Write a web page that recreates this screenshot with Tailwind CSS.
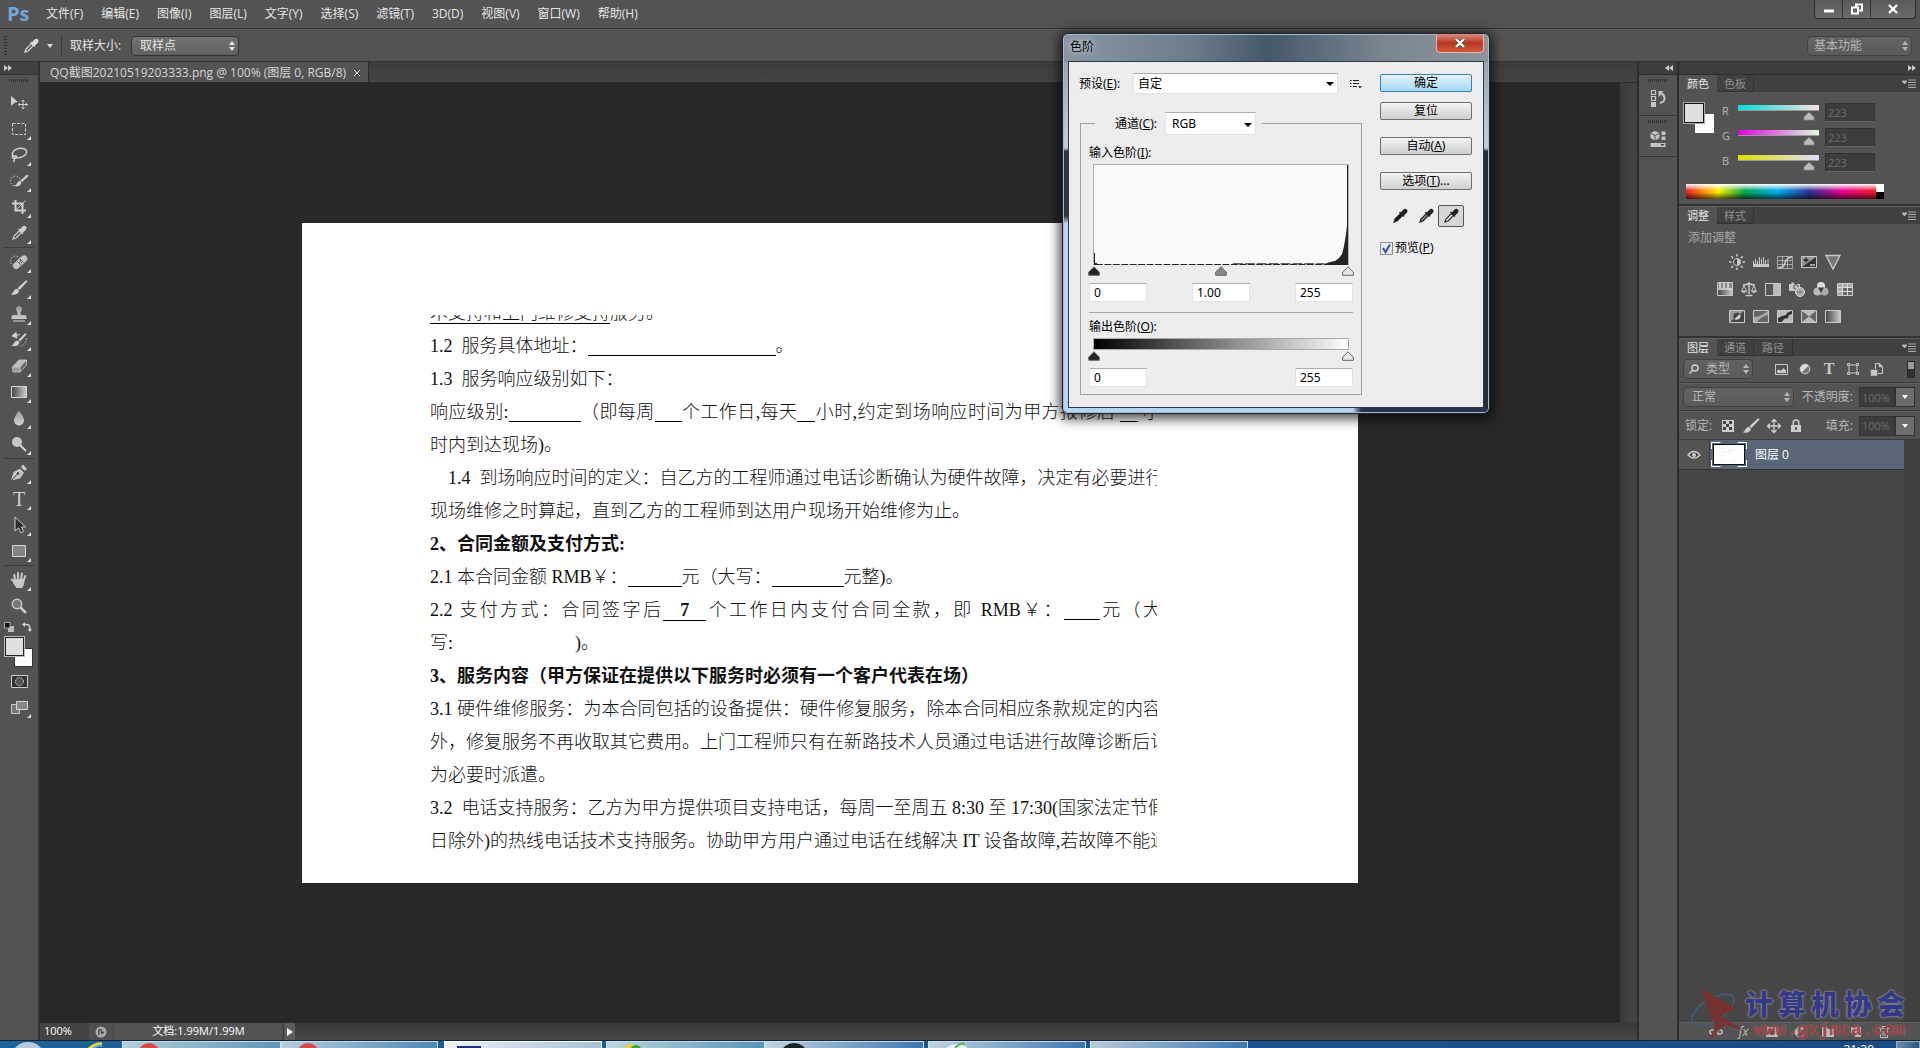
<!DOCTYPE html>
<html lang="zh-CN">
<head>
    <meta charset="UTF-8">
    <meta name="viewport" content="width=device-width, initial-scale=1.0">
    <title>QQ截图20210519203333.png @ 100%</title>
    <script src="https://cdn.jsdelivr.net/npm/@tailwindcss/browser@4"></script>
</head>
<body class="relative flex h-screen flex-col overflow-hidden bg-[#535353] font-['Open_Sans','Noto_Sans_CJK_SC',sans-serif] text-xs text-[#e6e6e6]">

    <!-- Shared icons -->
    <svg class="absolute h-0 w-0" aria-hidden="true">
        <symbol id="dropper" viewBox="0 0 16 16">
            <path d="M2 14l1-3 5.500-5.500 2 2L5 13z" fill="none" stroke="currentColor" stroke-width="1.200"/>
            <path d="M7.500 4l4.500 4.500M9 5.500l3-3.500q1.500-1 2.300 0t0 2.300L11 7.500z" fill="currentColor" stroke="currentColor" stroke-width="1.500"/>
        </symbol>
        <symbol id="brush" viewBox="0 0 18 16">
            <path d="M17 .5q.8.6 0 1.500L9.500 10l-2-1.800L15.500.7q1-.6 1.500-.2zM7 8.800l2 1.900q-.5 3-4 3.800-2 .5-4.500-.3 2.300-.6 2.800-2.400Q4 9.200 7 8.800z" fill="currentColor"/>
        </symbol>
        <symbol id="updown" viewBox="0 0 8 10">
            <path d="M4 0l3 4H1zM4 10l3-4H1z" fill="currentColor"/>
        </symbol>
        <symbol id="menu" viewBox="0 0 14 9">
            <path d="M0 2h5L2.500 5zM6 1h8M6 3.500h8M6 6h8M6 8.500h8" fill="currentColor" stroke="currentColor" stroke-width=".9"/>
        </symbol>
        <symbol id="thumb" viewBox="0 0 12 10">
            <path d="M6 .8L11.300 6v3.300H.7V6z" fill="currentColor" stroke="#666"/>
        </symbol>
        <symbol id="corner" viewBox="0 0 4 4"><path d="M4 0v4H0z" fill="#ddd"/></symbol>
        <linearGradient id="gray"><stop stop-color="#444"/><stop offset="1" stop-color="#ccc"/></linearGradient>
        <linearGradient id="light" x2="0" y2="1"><stop stop-color="#9a9a9a"/><stop offset="1" stop-color="#d6d6d6"/></linearGradient>
    </svg>

    <!-- Menu bar -->
    <header class="flex h-[29px] shrink-0 items-start justify-between border-b border-[#323232] pl-[7px] pr-1">
        <div class="flex h-7 items-center">
            <span class="w-[39px] text-xl font-bold text-[#76a5d5]">Ps</span>
            <nav class="flex gap-[18px] whitespace-nowrap">
                <a href="#">文件(F)</a>
                <a href="#">编辑(E)</a>
                <a href="#">图像(I)</a>
                <a href="#">图层(L)</a>
                <a href="#">文字(Y)</a>
                <a href="#">选择(S)</a>
                <a href="#">滤镜(T)</a>
                <a href="#">3D(D)</a>
                <a href="#">视图(V)</a>
                <a href="#">窗口(W)</a>
                <a href="#">帮助(H)</a>
            </nav>
        </div>
        <div class="flex h-[19px] rounded-b border border-t-0 border-[#2e2e2e] bg-linear-to-b from-[#5a5a5a] to-[#6a6a6a] text-white">
            <button aria-label="最小化" class="flex w-7 items-center justify-center border-r border-[#333]"><svg class="h-3 w-3" viewBox="0 0 12 12"><path d="M1 6.500h10v3H1z" fill="currentColor"/></svg></button>
            <button aria-label="还原" class="flex w-7 items-center justify-center border-r border-[#333]"><svg class="h-3 w-3" viewBox="0 0 12 12" fill="none" stroke="currentColor" stroke-width="2"><path d="M1 4.500h6v6H1zM5 4V1.500h6v6H8"/></svg></button>
            <button aria-label="关闭" class="flex w-11 items-center justify-center"><svg class="h-3 w-3" viewBox="0 0 12 12" stroke="currentColor" stroke-width="2.400"><path d="M2 2l8 8M10 2l-8 8"/></svg></button>
        </div>
    </header>

    <!-- Options bar -->
    <div class="flex h-[33px] shrink-0 items-center justify-between border-b border-t border-b-[#323232] border-t-[#5e5e5e] pl-1 pr-2">
        <div class="flex items-center">
            <div class="h-5 w-[3px] bg-[repeating-linear-gradient(#2f2f2f_0_1px,transparent_1px_3px)]"></div>
            <svg class="ml-4 h-4 w-4 text-[#ddd]"><use href="#dropper"/></svg>
            <svg class="ml-2 h-1 w-1.5" viewBox="0 0 6 4"><path d="M0 0h6L3 4z" fill="#ddd"/></svg>
            <div class="ml-2 h-[22px] border-l border-[#3a3a3a]"></div>
            <label for="sample" class="ml-2 w-[61px] whitespace-nowrap">取样大小:</label>
            <div class="relative">
                <select id="sample" class="h-5 w-[108px] appearance-none rounded-sm border border-[#333] bg-linear-to-b from-[#737373] to-[#606060] pl-2 text-xs"><option>取样点</option></select>
                <svg class="pointer-events-none absolute right-[3px] top-[5px] h-2.5 w-2"><use href="#updown"/></svg>
            </div>
        </div>
        <div class="relative text-[#b4b4b4]">
            <select aria-label="工作区" class="h-5 w-[105px] appearance-none rounded-sm border border-[#414141] bg-linear-to-b from-[#646464] to-[#5a5a5a] pl-1.5 text-xs"><option>基本功能</option></select>
            <svg class="pointer-events-none absolute right-[3px] top-[5px] h-2.5 w-2"><use href="#updown"/></svg>
        </div>
    </div>

    <div class="flex min-h-0 flex-1">

        <!-- Tools -->
        <aside class="flex w-10 shrink-0 flex-col border-r-2 border-[#323232] text-[#d0d0d0]">
            <div class="flex h-[13px] items-center border-b border-[#333] bg-[#414141] pl-1"><svg class="h-1.5 w-2" viewBox="0 0 8 6"><path d="M0 0l4 3-4 3zM4 0l4 3-4 3z" fill="#ccc"/></svg></div>
            <div class="mx-auto mb-2 mt-1 h-[3px] w-5 bg-[repeating-linear-gradient(90deg,#2f2f2f_0_1px,transparent_1px_2px)]"></div>
            <button aria-label="移动" class="relative flex h-[26px] items-center justify-center">
                <svg class="h-4 w-[18px]" viewBox="0 0 18 16"><path d="M1 1l7 6-3 .5L1 11z" fill="currentColor"/><path d="M13 5v9M8.500 9.500h9M11.500 6.500L13 5l1.500 1.500M11.500 12.500L13 14l1.500-1.500M10 8L8.500 9.500 10 11M16 8l1.500 1.500L16 11" fill="none" stroke="currentColor"/></svg>
            </button>
            <button aria-label="矩形选框" class="relative flex h-[26px] items-center justify-center">
                <svg class="h-4 w-4" viewBox="0 0 16 16"><path d="M1.500 2.500h13v11h-13z" fill="none" stroke="currentColor" stroke-dasharray="3 1.500"/></svg>
                <svg class="absolute bottom-0.5 right-[7px] h-1 w-1"><use href="#corner"/></svg>
            </button>
            <button aria-label="套索" class="relative flex h-[26px] items-center justify-center">
                <svg class="h-4 w-[18px]" viewBox="0 0 18 16" fill="none" stroke="currentColor" stroke-width="1.500"><ellipse cx="9.500" cy="6" rx="7.300" ry="4.500" transform="rotate(-12 9.500 6)"/><path d="M3.500 8.500q-2 1-.5 2.500t3-.5-2-1.500M4 11q1 2-.5 4"/></svg>
                <svg class="absolute bottom-0.5 right-[7px] h-1 w-1"><use href="#corner"/></svg>
            </button>
            <button aria-label="快速选择" class="relative flex h-[26px] items-center justify-center">
                <svg class="h-4 w-5" viewBox="0 0 20 16"><circle cx="6.500" cy="8" r="5" fill="none" stroke="currentColor" stroke-dasharray="1.500 1.500"/><path d="M19 2q.8.800 0 1.500L13 9l-1.500-1.500L17.500 2q.9-.6 1.500 0zM11 8l1.500 1.600q-.5 3-3 3.400-2 .5-4.500-.5 2.500-.5 3-2.300T11 8z" fill="currentColor"/></svg>
                <svg class="absolute bottom-0.5 right-[7px] h-1 w-1"><use href="#corner"/></svg>
            </button>
            <button aria-label="裁剪" class="relative flex h-[26px] items-center justify-center">
                <svg class="h-4 w-4" viewBox="0 0 16 16" fill="none" stroke="currentColor"><path d="M4.500 1v10.500H15M1 4.500h10.500V15" stroke-width="2"/><path d="M5 11l9.500-9.500"/></svg>
                <svg class="absolute bottom-0.5 right-[7px] h-1 w-1"><use href="#corner"/></svg>
            </button>
            <button aria-label="吸管" class="relative flex h-[26px] items-center justify-center">
                <svg class="h-4 w-4"><use href="#dropper"/></svg>
                <svg class="absolute bottom-0.5 right-[7px] h-1 w-1"><use href="#corner"/></svg>
            </button>
            <div class="mx-1 my-px h-px bg-[#3c3c3c]"></div>
            <button aria-label="污点修复画笔" class="relative flex h-[26px] items-center justify-center">
                <svg class="h-4 w-5" viewBox="0 0 20 16"><circle cx="6.500" cy="7" r="5" fill="none" stroke="currentColor" stroke-dasharray="1.500 1.500"/><rect x="2.500" y="5" width="17" height="6.500" rx="3" fill="#c4c4c4" transform="rotate(-42 11 8)"/><path d="M8.500 7.500l3.500 3.500M11 5l3.500 3.500" stroke="#555"/><path d="M10.500 8h1M12 8.500h1M11 6.500h1" stroke="#444"/></svg>
                <svg class="absolute bottom-0.5 right-[7px] h-1 w-1"><use href="#corner"/></svg>
            </button>
            <button aria-label="画笔" class="relative flex h-[26px] items-center justify-center">
                <svg class="h-4 w-[18px]"><use href="#brush"/></svg>
                <svg class="absolute bottom-0.5 right-[7px] h-1 w-1"><use href="#corner"/></svg>
            </button>
            <button aria-label="仿制图章" class="relative flex h-[26px] items-center justify-center">
                <svg class="h-4 w-4" viewBox="0 0 16 16"><path d="M8 0a3 3 0 0 1 2.500 4.500Q9.500 6 9.500 9H14q1.500 0 1.500 1.500V13H.5v-2.500Q.5 9 2 9h4.500q0-3-1-4.500A3 3 0 0 1 8 0zM2 14.500h12v1H2z" fill="url(#light)"/></svg>
                <svg class="absolute bottom-0.5 right-[7px] h-1 w-1"><use href="#corner"/></svg>
            </button>
            <button aria-label="历史记录画笔" class="relative flex h-[26px] items-center justify-center">
                <svg class="h-4 w-[18px]" viewBox="0 0 18 16"><path d="M16 1.500q.8.700 0 1.500L10 9.500 8.300 8 14.500 1.700q1-.7 1.500-.2zM7.800 8.500l1.700 1.700q-.5 3-3.500 3.800-2 .5-5-.5 2.500-.5 3-2.500t3.800-2.500z" fill="currentColor"/><path d="M10 2.500L4 4M6 .5L2 4l5 2z" fill="currentColor" stroke="currentColor"/><path d="M16 6q1 7-7 8.500" fill="none" stroke="currentColor" stroke-dasharray="1.500 1.500"/></svg>
                <svg class="absolute bottom-0.5 right-[7px] h-1 w-1"><use href="#corner"/></svg>
            </button>
            <button aria-label="橡皮擦" class="relative flex h-[26px] items-center justify-center">
                <svg class="h-4 w-4" viewBox="0 0 16 16" stroke="#ccc" stroke-width=".8"><path d="M8 2h7.500L9 9H1.500z" fill="#bbb"/><path d="M1.500 9H9v5H2z" fill="#999"/><path d="M9 9l6.500-7v5L9 14z" fill="#666"/></svg>
                <svg class="absolute bottom-0.5 right-[7px] h-1 w-1"><use href="#corner"/></svg>
            </button>
            <button aria-label="渐变" class="relative flex h-[26px] items-center justify-center">
                <svg class="h-4 w-4" viewBox="0 0 16 16"><path d="M.5 2.500h15v11H.5z" fill="url(#gray)" stroke="#d6d6d6"/></svg>
                <svg class="absolute bottom-0.5 right-[7px] h-1 w-1"><use href="#corner"/></svg>
            </button>
            <button aria-label="模糊" class="relative flex h-[26px] items-center justify-center">
                <svg class="h-4 w-4" viewBox="0 0 16 16"><path d="M8 .5q5 6.500 5 10a5 5 0 0 1-10 0Q3 7 8 .5z" fill="url(#light)"/></svg>
                <svg class="absolute bottom-0.5 right-[7px] h-1 w-1"><use href="#corner"/></svg>
            </button>
            <button aria-label="减淡" class="relative flex h-[26px] items-center justify-center">
                <svg class="h-4 w-4" viewBox="0 0 16 16"><circle cx="6" cy="6" r="5" fill="#c6c6c6"/><path d="M9 9l6 6" stroke="#ccc" stroke-width="2.200"/></svg>
                <svg class="absolute bottom-0.5 right-[7px] h-1 w-1"><use href="#corner"/></svg>
            </button>
            <div class="mx-1 my-px h-px bg-[#3c3c3c]"></div>
            <button aria-label="钢笔" class="relative flex h-[26px] items-center justify-center">
                <svg class="h-[18px] w-[18px]" viewBox="0 0 18 18"><path d="M1 16.500L3.500 8 10 4.500 14 9l-4 5.500z" fill="#c4c4c4"/><path d="M11 3l2-2.500L17 5l-2.200 2z" fill="#ccc"/><path d="M1.500 16.500L7.500 10" stroke="#444"/><circle cx="8" cy="9.500" r="1.300" fill="#444"/></svg>
                <svg class="absolute bottom-0.5 right-[7px] h-1 w-1"><use href="#corner"/></svg>
            </button>
            <button aria-label="横排文字" class="relative flex h-[26px] items-center justify-center font-['Liberation_Serif',serif] text-xl leading-none">T
                <svg class="absolute bottom-0.5 right-[7px] h-1 w-1"><use href="#corner"/></svg>
            </button>
            <button aria-label="路径选择" class="relative flex h-[26px] items-center justify-center">
                <svg class="h-[18px] w-4" viewBox="0 0 16 18"><path d="M4 1v14l3.500-3L10 17l2.500-1.500-2-4.500h4z" fill="#2e2e2e" stroke="#ccc"/></svg>
                <svg class="absolute bottom-0.5 right-[7px] h-1 w-1"><use href="#corner"/></svg>
            </button>
            <button aria-label="矩形" class="relative flex h-[26px] items-center justify-center">
                <svg class="h-4 w-4" viewBox="0 0 16 16"><path d="M1.500 2.500h13v11h-13z" fill="#858585" stroke="#d6d6d6"/></svg>
                <svg class="absolute bottom-0.5 right-[7px] h-1 w-1"><use href="#corner"/></svg>
            </button>
            <div class="mx-1 my-px h-px bg-[#3c3c3c]"></div>
            <button aria-label="抓手" class="relative flex h-[26px] items-center justify-center">
                <svg class="h-[18px] w-[18px]" viewBox="0 0 18 18"><path d="M5 9L4.300 4M8 8V2M11 8.500L12 2.500M13.500 9.500l1.700-4.500M6 13L2 8.500" stroke="#c8c8c8" stroke-width="2.100" stroke-linecap="round"/><path d="M4 8h10.500q.5 5-2.500 9H6.500L3 12z" fill="#c8c8c8"/></svg>
                <svg class="absolute bottom-0.5 right-[7px] h-1 w-1"><use href="#corner"/></svg>
            </button>
            <button aria-label="缩放" class="relative flex h-[26px] items-center justify-center">
                <svg class="h-4 w-4" viewBox="0 0 16 16"><circle cx="6" cy="6" r="4.700" fill="#777" stroke="#c8c8c8" stroke-width="1.500"/><path d="M9.500 9.500l5.500 5.500" stroke="#c8c8c8" stroke-width="2.500"/></svg>
            </button>
            <div class="flex h-4 items-center justify-between px-1 pr-1.5">
                <button aria-label="默认颜色"><svg class="h-2.5 w-2.5" viewBox="0 0 10 10"><path d="M4 4h6v6H4z" fill="#bbb"/><path d="M.5.5h5.500v5.500H.5z" fill="#111" stroke="#aaa"/></svg></button>
                <button aria-label="切换颜色"><svg class="h-2.5 w-2.5" viewBox="0 0 10 10"><path d="M2 2.500h3q3 0 3 5" fill="none" stroke="currentColor" stroke-width="1.500"/><path d="M3 0v5L0 2.500zM5.500 7H10L8 10z" fill="currentColor"/></svg></button>
            </div>
            <div class="grid h-[33px] px-[5px] pb-px pt-0.5">
                <button aria-label="背景色" class="h-[19px] w-[19px] self-end justify-self-end border border-[#333] bg-white [grid-area:1/1]"></button>
                <button aria-label="前景色" class="h-[19px] w-[19px] border border-[#222] bg-[#dfdfdf] outline outline-[#bbb] [grid-area:1/1]"></button>
            </div>
            <button aria-label="快速蒙版" class="relative flex h-[26px] items-center justify-center">
                <svg class="h-[13px] w-[17px]" viewBox="0 0 17 13"><path d="M.5.5h16v12H.5z" fill="#333" stroke="#ccc"/><circle cx="8.500" cy="6.500" r="4" fill="#555" stroke="#ddd" stroke-dasharray="1.500 1"/></svg>
            </button>
            <button aria-label="屏幕模式" class="relative flex h-[26px] items-center justify-center">
                <svg class="h-[13px] w-[17px]" viewBox="0 0 17 13"><path d="M.5 3.500h8v9h-8z" fill="#777" stroke="#ccc"/><path d="M5.500.5h11v8h-11z" fill="#888" stroke="#d6d6d6"/></svg>
                <svg class="absolute bottom-0.5 right-[7px] h-1 w-1"><use href="#corner"/></svg>
            </button>
        </aside>

        <!-- Document window -->
        <main class="flex min-w-0 flex-1 flex-col">
            <div class="flex h-[21px] shrink-0 border-b border-[#2a2a2a] bg-linear-to-b from-[#3c3c3c] to-[#444]">
                <div class="flex items-center gap-2 border-r border-[#2a2a2a] bg-[#535353] px-2 pl-2.5 pt-0.5 text-[#d6d6d6]">
                    <span class="whitespace-nowrap">QQ截图20210519203333.png @ 100% (图层 0, RGB/8)</span>
                    <button aria-label="关闭文档"><svg class="h-1.5 w-1.5" viewBox="0 0 6 6" stroke="#ddd"><path d="M0 0l6 6M6 0L0 6"/></svg></button>
                </div>
            </div>
            <div class="flex min-h-0 flex-1">
                <div class="flex min-w-0 flex-1 items-center justify-center bg-[#282828]">
                    <article class="flex h-[660px] w-[1056px] shrink-0 flex-col bg-white pl-32 pt-[92px] font-['Liberation_Serif','Noto_Sans_CJK_SC',serif] text-lg font-light leading-[33px] text-[#111]">
                        <div class="w-[727px] overflow-hidden">
                            <div class="-mt-[18px] w-[731px] whitespace-nowrap">
                                <p><span class="border-b border-black">术支持和上门维修支持</span>服务。</p>
                                <p>1.2&nbsp; 服务具体地址：<span class="inline-block w-[188px] border-b border-black align-[-4px]"></span>。</p>
                                <p>1.3&nbsp; 服务响应级别如下：</p>
                                <p class="[text-align-last:justify]">响应级别:<span class="inline-block w-[72px] border-b border-black align-[-4px]"></span>（即每周<span class="inline-block w-[27px] border-b border-black align-[-4px]"></span>个工作日,每天<span class="inline-block w-[18px] border-b border-black align-[-4px]"></span>小时,约定到场响应时间为甲方报修后 <span class="inline-block w-[18px] border-b border-black align-[-4px]"></span> 小</p>
                                <p>时内到达现场)。</p>
                                <p class="pl-[18px] [text-align-last:justify]">1.4&nbsp; 到场响应时间的定义：自乙方的工程师通过电话诊断确认为硬件故障，决定有必要进行</p>
                                <p>现场维修之时算起，直到乙方的工程师到达用户现场开始维修为止。</p>
                                <h2 class="font-bold">2、合同金额及支付方式:</h2>
                                <p>2.1 本合同金额 RMB￥：<span class="inline-block w-[54px] border-b border-black align-[-4px]"></span>元（大写：<span class="inline-block w-[72px] border-b border-black align-[-4px]"></span>元整)。</p>
                                <p class="[text-align-last:justify]">2.2 支付方式：合同签字后<span class="inline-block w-[43px] border-b border-black font-bold leading-5 [text-align-last:center]">7</span>个工作日内支付合同全款，即 RMB￥：<span class="inline-block w-9 border-b border-black align-[-4px]"></span>元（大</p>
                                <p>写:<span class="inline-block w-[122px]"></span>)。</p>
                                <h2 class="font-bold">3、服务内容（甲方保证在提供以下服务时必须有一个客户代表在场）</h2>
                                <p class="[text-align-last:justify]">3.1 硬件维修服务：为本合同包括的设备提供：硬件修复服务，除本合同相应条款规定的内容</p>
                                <p class="[text-align-last:justify]">外，修复服务不再收取其它费用。上门工程师只有在新路技术人员通过电话进行故障诊断后认</p>
                                <p>为必要时派遣。</p>
                                <p class="[text-align-last:justify]">3.2&nbsp; 电话支持服务：乙方为甲方提供项目支持电话，每周一至周五 8:30 至 17:30(国家法定节假</p>
                                <p class="[text-align-last:justify]">日除外)的热线电话技术支持服务。协助甲方用户通过电话在线解决 IT 设备故障,若故障不能通</p>
                            </div>
                        </div>
                    </article>
                </div>
                <div class="w-[17px] shrink-0 bg-linear-to-r from-[#3a3a3a] to-[#444]"></div>
            </div>
            <footer class="flex h-[17px] shrink-0 items-stretch bg-linear-to-b from-[#383838] to-[#464646] text-[11px] leading-4 text-white">
                <span class="w-[49px] bg-[#444] pl-1">100%</span>
                <span class="flex w-6 items-center justify-center bg-[#505050]"><svg class="h-3 w-3" viewBox="0 0 12 12"><circle cx="6" cy="6" r="5.500" fill="#aaa"/><path d="M4 9V4h3M6 6.500h3M7 5v3" fill="none" stroke="#444" stroke-width="1.300"/></svg></span>
                <span class="w-[170px] border-l border-[#444] bg-[#535353] text-center">文档:1.99M/1.99M</span>
                <button aria-label="状态栏菜单" class="flex w-3 items-center justify-center border-l border-[#333] bg-[#5c5c5c]"><svg class="h-2 w-1.5" viewBox="0 0 6 8"><path d="M0 0l6 4-6 4z" fill="#fff"/></svg></button>
            </footer>
        </main>

        <!-- Collapsed panel dock -->
        <aside class="flex w-[42px] shrink-0 flex-col border-x-2 border-[#2c2c2c] text-[#c4c4c4]">
            <div class="flex h-[13px] items-center justify-end border-b border-[#2c2c2c] bg-[#3d3d3d] pr-1"><svg class="h-1.5 w-2" viewBox="0 0 8 6"><path d="M4 0L0 3l4 3zM8 0L4 3l4 3z" fill="#ccc"/></svg></div>
            <button aria-label="历史记录" class="flex h-[41px] flex-col items-center gap-[7px] border-b border-[#363636] pt-1">
                <span class="h-[3px] w-5 bg-[repeating-linear-gradient(90deg,#2f2f2f_0_1px,transparent_1px_2px)]"></span>
                <svg class="h-[18px] w-4" viewBox="0 0 16 18"><path d="M1.500 1.500h4v4h-4zM1.500 7.500h4v4h-4z" fill="none" stroke="currentColor" stroke-width="1.200"/><path d="M1 13h5v5H1z" fill="currentColor"/><path d="M10 14q5-1 4.500-5.500Q14 5 11 5" fill="none" stroke="currentColor" stroke-width="2"/><path d="M8.500 2v6.500L13.500 2z" fill="currentColor"/></svg>
            </button>
            <button aria-label="属性" class="flex h-[41px] flex-col items-center gap-[7px] border-b border-[#363636] pt-1">
                <span class="h-[3px] w-5 bg-[repeating-linear-gradient(90deg,#2f2f2f_0_1px,transparent_1px_2px)]"></span>
                <svg class="h-[18px] w-4" viewBox="0 0 16 18"><path d="M5 1l4.500 2v5L5 10.500.5 8V3z" fill="currentColor"/><path d="M.5 3L5 5.500 9.500 3M5 5.500v5" fill="none" stroke="#555"/><path d="M11.500 1.500h4v3.500h-4zM11.500 6.500h4V10h-4zM.5 13h15v4H.5z" fill="currentColor"/><path d="M10.500 14h4l-2 2z" fill="#333"/></svg>
            </button>
        </aside>

        <!-- Panels -->
        <aside class="flex w-[241px] shrink-0 flex-col text-[#b8b8b8]">
            <div class="flex h-[13px] items-center justify-end border-b border-[#2c2c2c] bg-[#3d3d3d] pr-1"><svg class="h-1.5 w-2" viewBox="0 0 8 6"><path d="M0 0l4 3-4 3zM4 0l4 3-4 3z" fill="#ccc"/></svg></div>

            <!-- Color -->
            <section class="h-[131px] border-b-2 border-[#323232]">
                <div class="flex h-[17px] items-stretch bg-[#404040] text-[11px] leading-[17px]">
                    <button class="bg-[#535353] px-2 text-[#e6e6e6]">颜色</button>
                    <button class="border-b border-r border-[#323232] px-[7px] text-[#909090]">色板</button>
                    <button aria-label="面板菜单" class="ml-auto mr-1"><svg class="h-[9px] w-3.5"><use href="#menu"/></svg></button>
                </div>
                <div class="flex pl-[5px] pt-[11px]">
                    <div class="grid h-[30px] w-[30px]">
                        <button aria-label="背景色" class="h-[19px] w-[19px] self-end justify-self-end bg-white [grid-area:1/1]"></button>
                        <button aria-label="前景色" class="h-5 w-5 border border-[#111] bg-[#dfdfdf] outline outline-[#aaa] [grid-area:1/1]"></button>
                    </div>
                    <div class="ml-2 flex flex-col gap-1.5">
                        <div class="flex h-[19px] items-start">
                            <label for="red" class="w-4 text-[11px] leading-4">R</label>
                            <div class="grid w-[81px] pt-0.5">
                                <div class="h-1.5 border-b border-[#999] bg-[linear-gradient(90deg,#00dfdf,#ffdfdf)]"></div>
                                <div class="relative h-2.5 w-full"><svg class="absolute h-2.5 w-3 -translate-x-1/2 text-[#bbb]" style="left: 87.45%"><use href="#thumb"/></svg><input type="range" aria-label="R" max="255" value="223" class="absolute inset-0 w-full opacity-0"></div>
                            </div>
                            <input id="red" value="223" class="ml-1.5 h-[19px] w-[50px] border border-[#323232] border-b-[#666] bg-[#3c3c3c] pl-0.5 text-[11px] text-[#6e6e6e]">
                        </div>
                        <div class="flex h-[19px] items-start">
                            <label for="green" class="w-4 text-[11px] leading-4">G</label>
                            <div class="grid w-[81px] pt-0.5">
                                <div class="h-1.5 border-b border-[#999] bg-[linear-gradient(90deg,#df00df,#dfffdf)]"></div>
                                <div class="relative h-2.5 w-full"><svg class="absolute h-2.5 w-3 -translate-x-1/2 text-[#bbb]" style="left: 87.45%"><use href="#thumb"/></svg><input type="range" aria-label="G" max="255" value="223" class="absolute inset-0 w-full opacity-0"></div>
                            </div>
                            <input id="green" value="223" class="ml-1.5 h-[19px] w-[50px] border border-[#323232] border-b-[#666] bg-[#3c3c3c] pl-0.5 text-[11px] text-[#6e6e6e]">
                        </div>
                        <div class="flex h-[19px] items-start">
                            <label for="blue" class="w-4 text-[11px] leading-4">B</label>
                            <div class="grid w-[81px] pt-0.5">
                                <div class="h-1.5 border-b border-[#999] bg-[linear-gradient(90deg,#dfdf00,#dfdfff)]"></div>
                                <div class="relative h-2.5 w-full"><svg class="absolute h-2.5 w-3 -translate-x-1/2 text-[#bbb]" style="left: 87.45%"><use href="#thumb"/></svg><input type="range" aria-label="B" max="255" value="223" class="absolute inset-0 w-full opacity-0"></div>
                            </div>
                            <input id="blue" value="223" class="ml-1.5 h-[19px] w-[50px] border border-[#323232] border-b-[#666] bg-[#3c3c3c] pl-0.5 text-[11px] text-[#6e6e6e]">
                        </div>
                    </div>
                </div>
                <div class="ml-[7px] mt-3 flex h-[15px] w-[198px]">
                    <div class="flex-1 bg-[linear-gradient(#fff_0%,transparent_45%,transparent_55%,#000a_100%),linear-gradient(90deg,#ed1c24,#fff200_17%,#00a651_31%,#00aeef_48%,#2e3192_65%,#ec008c_83%,#ed1c24)]"></div>
                    <div class="w-2 bg-linear-to-b from-white from-50% to-black to-50%"></div>
                </div>
            </section>

            <!-- Adjustments -->
            <section class="h-[132px] border-b-2 border-t border-b-[#323232] border-t-[#5e5e5e]">
                <div class="flex h-[17px] items-stretch bg-[#404040] text-[11px] leading-[17px]">
                    <button class="bg-[#535353] px-2 text-[#e6e6e6]">调整</button>
                    <button class="border-b border-r border-[#323232] px-[7px] text-[#909090]">样式</button>
                    <button aria-label="面板菜单" class="ml-auto mr-1"><svg class="h-[9px] w-3.5"><use href="#menu"/></svg></button>
                </div>
                <p class="pl-[9px] pt-1.5 text-[#a8a8a8]">添加调整</p>
                <div class="mt-2 flex w-[211px] flex-col items-center gap-[11px] text-[#c8c8c8]">
                    <div class="flex gap-2">
                        <button aria-label="亮度/对比度"><svg class="h-4 w-4" viewBox="0 0 16 16"><circle cx="8" cy="8" r="3.500" fill="#444" stroke="currentColor"/><path d="M8 4.500a3.500 3.500 0 0 1 0 7z" fill="currentColor"/><path d="M8 0v2.500M8 13.500V16M0 8h2.500M13.500 8H16M2.300 2.300l1.800 1.800M11.900 11.900l1.800 1.800M2.300 13.700l1.800-1.800M11.900 4.100l1.800-1.800" stroke="currentColor" stroke-width="1.500"/></svg></button>
                        <button aria-label="色阶"><svg class="h-4 w-4" viewBox="0 0 16 16"><path d="M0 10h16v3H0z" fill="currentColor"/><path d="M.5 10V7M2.500 10V5M4.500 10V7M6.500 10V3M8.500 10V5M10.500 10V3M12.500 10V6M15 10V5" stroke="currentColor"/></svg></button>
                        <button aria-label="曲线"><svg class="h-4 w-4" viewBox="0 0 16 16" fill="none" stroke="currentColor"><path d="M.5 2.500h15v12H.5zM5.500 2v12M10.500 2v12M1 6.500h14M1 10.500h14" opacity=".7"/><path d="M1 14q6 0 7-5t7-6" stroke-width="1.500"/></svg></button>
                        <button aria-label="曝光度"><svg class="h-4 w-4" viewBox="0 0 16 16"><path d="M.5 2.500h15v11H.5z" fill="#333" stroke="currentColor"/><path d="M1 13V3h14z" fill="#999"/><path d="M2.500 6h5M5 3.500v5" stroke="#222" stroke-width="1.300"/><path d="M9 11h5" stroke="#ddd" stroke-width="1.300"/></svg></button>
                        <button aria-label="自然饱和度"><svg class="h-4 w-4" viewBox="0 0 16 16"><path d="M1 1.500h14L8 15z" fill="#777" stroke="currentColor" stroke-width="1.400"/></svg></button>
                    </div>
                    <div class="flex gap-2">
                        <button aria-label="色相/饱和度"><svg class="h-4 w-4" viewBox="0 0 16 16"><path d="M.5 1.500h15v13H.5z" fill="url(#gray)" stroke="currentColor"/><path d="M1 2h14v5H1z" fill="#888"/><path d="M3 2v5M7 2v5M11 2v5M1 8h14" stroke="#ddd" stroke-width="1.500"/></svg></button>
                        <button aria-label="色彩平衡"><svg class="h-4 w-4" viewBox="0 0 16 16" fill="none" stroke="currentColor"><path d="M8 1v12M2 4q3 0 6-1.500Q11 4 14 4M4.500 14.500h7" stroke-width="1.500"/><path d="M3 4.500L.8 10h4.600zM13 4.500L10.600 10h4.600z"/><path d="M0 10h6q-3 4-6 0zM10 10h6q-3 4-6 0z" fill="currentColor" stroke="none"/></svg></button>
                        <button aria-label="黑白"><svg class="h-4 w-4" viewBox="0 0 16 16"><path d="M.5 2.500h15v12H.5z" fill="#555" stroke="currentColor"/><path d="M8 3h7v11H8z" fill="#bbb"/></svg></button>
                        <button aria-label="照片滤镜"><svg class="h-4 w-4" viewBox="0 0 16 16"><path d="M0 3h2.500V1.500H5V3h6v7H0z" fill="currentColor"/><circle cx="7" cy="6" r="2.300" fill="none" stroke="#444"/><circle cx="11" cy="11" r="4.500" fill="#aaa" stroke="#ddd"/><path d="M8 11h5" stroke="#666"/></svg></button>
                        <button aria-label="通道混合器"><svg class="h-4 w-4" viewBox="0 0 16 16"><circle cx="8" cy="5" r="4" fill="#ddd"/><circle cx="4.500" cy="10.500" r="4" fill="#bbb"/><circle cx="11.500" cy="10.500" r="4" fill="#aaa"/><path d="M5 6.500h6L8 12z" fill="#3c3c3c"/></svg></button>
                        <button aria-label="颜色查找"><svg class="h-4 w-4" viewBox="0 0 16 16"><path d="M.5 2.500h15v12H.5z" fill="#666" stroke="#ccc"/><path d="M1 3h4v11H1zM5 3h10v3H5z" fill="#aaa"/><path d="M5.500 3v11M10.500 3v11M1 6.500h14M1 10.500h14" stroke="#ddd"/></svg></button>
                    </div>
                    <div class="flex gap-2">
                        <button aria-label="反相"><svg class="h-4 w-4" viewBox="0 0 16 16"><path d="M.5 2.500h15v12H.5z" fill="#444" stroke="currentColor"/><path d="M1 14V3h14z" fill="#999"/><circle cx="8" cy="8.500" r="3.700" fill="#444"/><path d="M5.300 11.200l5.300-5.300q2 2.500 0 4.700t-5.300.6z" fill="#ccc"/></svg></button>
                        <button aria-label="色调分离"><svg class="h-4 w-4" viewBox="0 0 16 16"><path d="M.5 2.500h15v12H.5z" fill="#666" stroke="currentColor"/><path d="M1 9q6 0 14-6v4Q9 8 4 14H1z" fill="#aaa"/></svg></button>
                        <button aria-label="阈值"><svg class="h-4 w-4" viewBox="0 0 16 16"><path d="M.5 2.500h15v12H.5z" fill="#333" stroke="currentColor"/><path d="M1 3h13l-4 2-1 2-4 1-4 2zM15 6l-3 1-1 3-4 1-2 3h10z" fill="#bbb"/></svg></button>
                        <button aria-label="可选颜色"><svg class="h-4 w-4" viewBox="0 0 16 16"><path d="M.5 2.500h15v12H.5z" fill="#666" stroke="currentColor"/><path d="M1 3h14L8 8.500zM1 14h14L8 8.500z" fill="#bbb"/></svg></button>
                        <button aria-label="渐变映射"><svg class="h-4 w-4" viewBox="0 0 16 16"><path d="M.5 2.500h15v12H.5z" fill="url(#gray)" stroke="currentColor"/></svg></button>
                    </div>
                </div>
            </section>

            <!-- Layers -->
            <section class="flex min-h-0 flex-1 flex-col border-t border-[#5e5e5e]">
                <div class="flex h-[17px] shrink-0 items-stretch bg-[#404040] text-[11px] leading-[17px]">
                    <button class="bg-[#535353] px-2 text-[#e6e6e6]">图层</button>
                    <button class="border-b border-r border-[#323232] px-[7px] text-[#909090]">通道</button>
                    <button class="border-b border-r border-[#323232] px-2 text-[#909090]">路径</button>
                    <button aria-label="面板菜单" class="ml-auto mr-1"><svg class="h-[9px] w-3.5"><use href="#menu"/></svg></button>
                </div>
                <div class="flex h-[27px] shrink-0 items-center border-b border-[#3c3c3c] pl-1 pr-[5px]">
                    <div class="relative">
                        <select aria-label="过滤类型" class="h-5 w-[70px] appearance-none rounded-sm border border-[#414141] bg-linear-to-b from-[#626262] to-[#5a5a5a] pl-[22px] text-xs"><option>类型</option></select>
                        <svg class="pointer-events-none absolute left-1.5 top-[5px] h-2.5 w-2.5" viewBox="0 0 10 10" fill="none" stroke="#ccc" stroke-width="1.500"><circle cx="6" cy="4" r="3"/><path d="M4 6L.5 9.500"/></svg>
                        <svg class="pointer-events-none absolute right-[3px] top-[5px] h-2.5 w-2"><use href="#updown"/></svg>
                    </div>
                    <div class="ml-5 flex gap-2 text-[#c8c8c8]">
                        <button aria-label="像素图层"><svg class="h-4 w-4" viewBox="0 0 16 16"><path d="M2.500 3.500h12v10h-12z" fill="none" stroke="currentColor"/><path d="M4 12V9.500l2-1 2 1.500 2.500-3L13 9.500V12z" fill="currentColor"/></svg></button>
                        <button aria-label="调整图层"><svg class="h-4 w-4" viewBox="0 0 16 16"><circle cx="8" cy="8" r="4.800" fill="#777" stroke="currentColor"/><path d="M4.500 11.500a5 5 0 0 1 7-7z" fill="#ddd"/></svg></button>
                        <button aria-label="文字图层" class="h-4 w-4 font-['Liberation_Serif',serif] text-base font-bold leading-4">T</button>
                        <button aria-label="形状图层"><svg class="h-4 w-4" viewBox="0 0 16 16" fill="none" stroke="currentColor"><path d="M4 4h8v8H4z"/><path d="M2.500 2.500h2v2h-2zM11.500 2.500h2v2h-2zM2.500 11.500h2v2h-2zM11.500 11.500h2v2h-2z"/></svg></button>
                        <button aria-label="智能对象"><svg class="h-4 w-4" viewBox="0 0 16 16"><path d="M6.500 8V2.500h4l3 3v7H9" fill="none" stroke="currentColor"/><path d="M10 2.500V6h3.500M2 9h6v5.500H2z" fill="currentColor" stroke="currentColor" stroke-width=".5"/></svg></button>
                    </div>
                    <button aria-label="图层过滤开关" class="ml-auto h-[17px] w-2 border border-[#2a2a2a] bg-linear-to-b from-[#999] from-50% to-[#333] to-50%"></button>
                </div>
                <div class="flex h-7 shrink-0 items-center justify-between border-b border-t border-b-[#3c3c3c] border-t-[#5e5e5e] pl-1 pr-[5px]">
                    <div class="relative">
                        <select aria-label="混合模式" class="h-5 w-[111px] appearance-none rounded-sm border border-[#414141] bg-linear-to-b from-[#626262] to-[#5a5a5a] pl-2 text-xs"><option>正常</option></select>
                        <svg class="pointer-events-none absolute right-[3px] top-[5px] h-2.5 w-2"><use href="#updown"/></svg>
                    </div>
                    <div class="flex items-center">
                        <label for="opacity" class="whitespace-nowrap pr-1.5">不透明度:</label>
                        <input id="opacity" value="100%" class="h-5 w-9 border border-[#323232] bg-[#3c3c3c] pl-0.5 text-[11px] text-[#6e6e6e]">
                        <button aria-label="不透明度滑块" class="flex h-5 w-5 items-center justify-center border border-[#323232] bg-[#6c6c6c]"><svg class="h-1 w-1.5" viewBox="0 0 6 4"><path d="M0 0h6L3 4z" fill="#fff"/></svg></button>
                    </div>
                </div>
                <div class="flex h-[29px] shrink-0 items-center border-b border-t border-b-[#3c3c3c] border-t-[#5e5e5e] pl-1.5 pr-[5px]">
                    <span>锁定:</span>
                    <div class="ml-2 flex items-center gap-1.5 text-[#d0d0d0]">
                        <button aria-label="锁定透明像素"><svg class="h-4 w-4" viewBox="0 0 16 16"><path d="M2 2h12v12H2z" fill="#ccc"/><path d="M3 3h3v3H3zM9 3h3v3H9zM6 6h3v3H6zM3 9h3v3H3zM9 9h3v3H9z" fill="#444"/></svg></button>
                        <button aria-label="锁定图像像素"><svg class="h-4 w-[18px]"><use href="#brush"/></svg></button>
                        <button aria-label="锁定位置"><svg class="h-4 w-4" viewBox="0 0 16 16" fill="none" stroke="currentColor" stroke-width="1.300"><path d="M8 2v12M2 8h12M5.500 4L8 1.500 10.500 4M5.500 12L8 14.500l2.500-2.500M4 5.500L1.500 8 4 10.500M12 5.500L14.500 8 12 10.500"/></svg></button>
                        <button aria-label="锁定全部"><svg class="h-4 w-4" viewBox="0 0 16 16"><path d="M3 7h10v7H3z" fill="#ccc"/><path d="M5.200 7V5q0-3 2.800-3t2.800 3v2" fill="none" stroke="#ccc" stroke-width="1.500"/><path d="M7.200 9h1.600v3H7.200z" fill="#444"/></svg></button>
                    </div>
                    <label for="fill" class="ml-auto pr-1.5">填充:</label>
                    <input id="fill" value="100%" class="h-5 w-9 border border-[#323232] bg-[#3c3c3c] pl-0.5 text-[11px] text-[#6e6e6e]">
                    <button aria-label="填充滑块" class="flex h-5 w-5 items-center justify-center border border-[#323232] bg-[#6c6c6c]"><svg class="h-1 w-1.5" viewBox="0 0 6 4"><path d="M0 0h6L3 4z" fill="#fff"/></svg></button>
                </div>
                <div class="flex min-h-0 flex-1">
                    <ul class="flex-1 bg-[#464646]">
                        <li class="flex h-[30px] items-center border-b border-[#333] bg-[#596678] text-white">
                            <button aria-label="图层可见性" class="flex h-full w-[31px] items-center justify-center border-r border-[#3c3c3c] bg-[#535353]"><svg class="h-2.5 w-3.5" viewBox="0 0 14 10"><path d="M1 5q6-7 12 0-6 6-12 0z" fill="#444" stroke="#ccc" stroke-width="1.300"/><circle cx="7" cy="5" r="2" fill="#ccc"/></svg></button>
                            <svg class="ml-px h-[25px] w-9" viewBox="0 0 36 25"><path d="M.5 7V.5h9M26.500.5h9V7M35.500 18v6.500h-9M9.500 24.500h-9V18" fill="none" stroke="#fff"/><path d="M2.500 2.500h31v20h-31z" fill="#fff" stroke="#111"/><path d="M8 7h6M17 8h10M8 10h12M10 13h3M8 19h6M20 19h7" stroke="#eee"/></svg>
                            <span class="ml-2">图层 0</span>
                        </li>
                    </ul>
                    <div class="w-4 shrink-0 bg-[#404040]"></div>
                </div>
                <div class="flex h-[18px] shrink-0 items-center justify-center gap-3 border-t border-[#5e5e5e] text-[#c0c0c0]">
                    <button aria-label="链接图层"><svg class="h-3.5 w-4" viewBox="0 0 16 14" fill="none" stroke="currentColor" stroke-width="1.500"><path d="M7 5H4a2 2 0 0 0 0 4h3M9 5h3a2 2 0 0 1 0 4H9M5 7h6"/></svg></button>
                    <button aria-label="图层样式" class="w-4 text-xs italic leading-4">fx</button>
                    <button aria-label="图层蒙版"><svg class="h-3.5 w-4" viewBox="0 0 16 14"><path d="M2 2h12v10H2z" fill="currentColor"/><circle cx="8" cy="7" r="3" fill="#444"/></svg></button>
                    <button aria-label="新建调整图层"><svg class="h-3.5 w-4" viewBox="0 0 16 14"><circle cx="8" cy="7" r="5" fill="#555" stroke="currentColor"/><path d="M4.500 10.500a5 5 0 0 1 7-7z" fill="currentColor"/></svg></button>
                    <button aria-label="新建组"><svg class="h-3.5 w-4" viewBox="0 0 16 14"><path d="M2 2h5l1 2h6v8H2z" fill="currentColor"/></svg></button>
                    <button aria-label="新建图层"><svg class="h-3.5 w-4" viewBox="0 0 16 14"><path d="M3 2h10v10H7L3 8z" fill="currentColor"/><path d="M3 8h4v4z" fill="#555"/></svg></button>
                    <button aria-label="删除图层"><svg class="h-3.5 w-4" viewBox="0 0 16 14" fill="none" stroke="currentColor"><path d="M3 3.500h10M6 3V1.500h4V3M4.500 4v8.500h7V4M7 6v5M9 6v5"/></svg></button>
                </div>
            </section>
        </aside>
    </div>

    <!-- Windows taskbar -->
    <div class="flex h-2 shrink-0 overflow-hidden border-t border-[#12263a] bg-linear-to-r from-[#1f6298] to-[#1b4a84]">
        <div class="flex w-[122px] shrink-0 gap-11 pl-3.5">
            <svg class="h-[7px] w-7" viewBox="0 0 28 7"><ellipse cx="14" cy="11" rx="14" ry="10" fill="#b8cbdc"/></svg>
            <svg class="h-[7px] w-5" viewBox="0 0 20 7" fill="none"><path d="M3 8Q10 2 16 3" stroke="#e8d73a" stroke-width="3"/><path d="M6 9q4-5 10-4" stroke="#4aa8e8" stroke-width="2"/></svg>
        </div>
        <div class="w-[159px] border border-b-0 border-[#cde] bg-linear-to-r from-[#b4cfdc] to-[#5f96b4] pl-4"><svg class="h-1.5 w-5" viewBox="0 0 20 6"><ellipse cx="10" cy="10" rx="10" ry="9" fill="#d8474a"/></svg></div>
        <div class="w-[157px] border border-b-0 border-[#cde] bg-linear-to-r from-[#b4cfdc] to-[#4d89b0] pl-4"><svg class="h-1.5 w-5" viewBox="0 0 20 6"><ellipse cx="10" cy="10" rx="10" ry="9" fill="#d8474a"/></svg></div>
        <div class="ml-1.5 w-[158px] border border-b-0 border-white bg-linear-to-r from-[#eef3f7] to-[#a5c0d6] pl-3 pt-1"><div class="h-1 w-6 bg-[#1c2f80]"></div></div>
        <div class="ml-1 w-[159px] border border-b-0 border-[#cde] bg-linear-to-r from-[#bcd8dc] to-[#5594b6] pl-4"><svg class="h-1.5 w-5" viewBox="0 0 20 6"><ellipse cx="7" cy="7" rx="6" ry="5" fill="#e8d040"/><ellipse cx="13" cy="7" rx="5" ry="4" fill="#3ea444"/></svg></div>
        <div class="w-[159px] border border-b-0 border-[#cde] bg-linear-to-r from-[#c2d4e0] to-[#3b78ac] pl-4"><svg class="h-1.5 w-6" viewBox="0 0 24 6"><ellipse cx="12" cy="10" rx="12" ry="9" fill="#152420"/></svg></div>
        <div class="ml-1 w-[158px] border border-b-0 border-[#cde] bg-linear-to-r from-[#c2d4e0] to-[#3b78ac] pl-4"><svg class="h-1.5 w-6" viewBox="0 0 24 6"><ellipse cx="12" cy="8" rx="11" ry="6" fill="#eef"/><path d="M10 6q4-5 10-4" fill="none" stroke="#5cb848" stroke-width="2"/></svg></div>
        <div class="ml-1 w-[158px] border border-b-0 border-[#cde] bg-linear-to-r from-[#b8cad8] to-[#3b78ac]"></div>
        <div class="ml-auto pr-[22px] pt-[3px] leading-3 text-white">21:20</div>
        <div class="w-6 border border-b-0 border-[#9ab] bg-linear-to-r from-[#6d8fae] to-[#2c5280]"></div>
    </div>

    <!-- Site watermark -->
    <div class="pointer-events-none absolute bottom-2 right-[15px] flex items-end opacity-90">
        <svg class="h-[52px] w-[54px]" viewBox="0 0 54 52"><ellipse cx="22" cy="22" rx="24" ry="11" transform="rotate(-32 22 22)" fill="none" stroke="#3f6286" stroke-width="1.500"/><path d="M9 0l35 20-14 8 24 15-20-6-16 15 6-13z" fill="#7c2f2f"/></svg>
        <div class="flex w-[160px] flex-col">
            <span class="text-[28px] font-black leading-8 text-[#33388f] [text-align-last:justify] [text-shadow:0_0_1px_#999,0_0_2px_#999,0_0_3px_#999]">计算机协会</span>
            <span class="text-right font-['Liberation_Mono',monospace] text-lg font-bold leading-5 text-[#a33b3f] [text-shadow:0_0_2px_#888]">www.gxjmca.com</span>
        </div>
    </div>

    <!-- Levels dialog -->
    <div role="dialog" aria-labelledby="levels-title" class="absolute right-[430px] top-[33px] w-[428px] rounded-md border border-[#1c2430] p-[5px] pt-0 font-['Noto_Sans','Noto_Sans_CJK_SC',sans-serif] text-black shadow-[0_2px_12px_3px_rgba(0,0,0,0.7),inset_0_0_0_1px_#a9bacb] [background:linear-gradient(90deg,#8a97a3,#6d7c8b_30%,#44586c_48%,#7a858f_75%,#8d959d)_top/100%_28px_no-repeat,linear-gradient(90deg,#b5d3f3_68%,#2a3148_70%)_bottom/100%_5px_no-repeat,linear-gradient(#8a97a3,#c8ced4_30%,#30363e_31%,#30363e_48%,#b5d3f3_50%)_left/6px_100%_no-repeat,linear-gradient(#8d959d,#c8ced4_30%,#252b38_31%)_right/6px_100%_no-repeat]">
        <div class="flex h-[27px] items-start justify-between pl-0.5">
            <h1 id="levels-title" class="pt-1 leading-[18px] [text-shadow:0_0_6px_#fff]">色阶</h1>
            <button aria-label="关闭" class="flex h-[19px] w-12 items-center justify-center rounded-b border border-t-0 border-[#e0b4ac] bg-linear-to-b from-[#d98b7e] via-[#b83422] to-[#cf5a3c]"><svg class="h-2.5 w-3" viewBox="0 0 12 10" fill="none"><path d="M2 1l8 8M10 1L2 9" stroke="#444" stroke-width="3.500"/><path d="M2 1l8 8M10 1L2 9" stroke="#fff" stroke-width="2.400"/></svg></button>
        </div>
        <div class="flex justify-between border border-[#2c3a4a] bg-[#ededed] pb-3 pl-2.5 pr-[11px] pt-[11px]">
            <div class="w-[283px]">
                <div class="flex items-center">
                    <label for="preset" class="w-[54px] whitespace-nowrap">预设(<u>E</u>):</label>
                    <div class="relative">
                        <select id="preset" class="h-[21px] w-[205px] appearance-none border border-[#e2e2e2] border-t-[#abadb3] bg-white pl-1 text-xs"><option>自定</option></select>
                        <svg class="pointer-events-none absolute right-1 top-[9px] h-1 w-2" viewBox="0 0 8 4"><path d="M0 0h8L4 4z"/></svg>
                    </div>
                    <button aria-label="预设选项" class="ml-3"><svg class="h-3 w-3" viewBox="0 0 12 12" stroke="#222" fill="#222"><path d="M0 2.500h1.500M0 5.500h1.500M0 8.500h1.500M3 2.500h6M3 5.500h6M3 8.500h4"/><path d="M8.500 8.500h3L10 10z" stroke-width=".5"/></svg></button>
                </div>
                <fieldset class="ml-px mt-[18px] w-[282px] border border-[#a0a0a0] px-2 pb-[7px]">
                    <legend class="ml-1.5 flex items-center pl-5 pr-1.5">
                        <label for="channel" class="w-[50px] whitespace-nowrap">通道(<u>C</u>):</label>
                        <span class="relative">
                            <select id="channel" class="h-[23px] w-[91px] appearance-none border border-[#e2e2e2] border-t-[#abadb3] bg-white pl-1.5 text-xs"><option>RGB</option></select>
                            <svg class="pointer-events-none absolute right-1 top-[11px] h-1 w-2" viewBox="0 0 8 4"><path d="M0 0h8L4 4z"/></svg>
                        </span>
                    </legend>
                    <label for="in-black" class="mt-[7px] block h-[22px] leading-[22px]">输入色阶(<u>I</u>):</label>
                    <div class="mx-1 h-[101px] border border-b-0 border-[#b0b0b0] bg-[#fafafa]">
                        <svg class="h-full w-full" viewBox="0 0 256 100" preserveAspectRatio="none"><path d="M0 100V88h1v10h2v2z" fill="#222"/><path d="M2 99.500h254" stroke="#222" stroke-dasharray="7 1.500"/><path d="M140 98.800h92" stroke="#222" stroke-dasharray="10 2"/><path d="M232 99l6-2 5-1 4-3 3-4 2-8 2-12 1-9V0h1v100h-24z" fill="#222"/></svg>
                    </div>
                    <div class="-mx-px grid h-3 pt-px">
                        <svg class="h-2.5 w-3 text-[#222] [grid-area:1/1]"><use href="#thumb"/></svg>
                        <svg class="h-2.5 w-3 justify-self-center text-[#888] [grid-area:1/1]"><use href="#thumb"/></svg>
                        <svg class="h-2.5 w-3 justify-self-end text-[#e6e6e6] [grid-area:1/1]"><use href="#thumb"/></svg>
                        <input type="range" aria-label="输入中间调" max="255" value="128" class="h-2.5 w-full opacity-0 [grid-area:1/1]">
                    </div>
                    <div class="mt-1.5 flex justify-between">
                        <input id="in-black" value="0" class="h-[19px] w-[58px] border border-[#e2e2e2] border-t-[#abadb3] bg-white pl-1">
                        <input aria-label="输入中间调" value="1.00" class="h-[19px] w-[58px] border border-[#e2e2e2] border-t-[#abadb3] bg-white pl-1">
                        <input aria-label="输入高光" value="255" class="h-[19px] w-[58px] border border-[#e2e2e2] border-t-[#abadb3] bg-white pl-1">
                    </div>
                    <hr class="mt-2.5 border-[#a8a8a8]">
                    <label for="out-black" class="mt-[3px] block h-[22px] leading-[22px]">输出色阶(<u>O</u>):</label>
                    <div class="mx-1 h-3 border border-[#aaa] bg-[linear-gradient(90deg,#000,#fff)]"></div>
                    <div class="-mx-px grid h-3 pt-px">
                        <svg class="h-2.5 w-3 text-[#222] [grid-area:1/1]"><use href="#thumb"/></svg>
                        <svg class="h-2.5 w-3 justify-self-end text-[#e6e6e6] [grid-area:1/1]"><use href="#thumb"/></svg>
                        <input type="range" aria-label="输出色阶" max="255" value="255" class="h-2.5 w-full opacity-0 [grid-area:1/1]">
                    </div>
                    <div class="mt-1.5 flex justify-between">
                        <input id="out-black" value="0" class="h-[19px] w-[58px] border border-[#e2e2e2] border-t-[#abadb3] bg-white pl-1">
                        <input aria-label="输出高光" value="255" class="h-[19px] w-[58px] border border-[#e2e2e2] border-t-[#abadb3] bg-white pl-1">
                    </div>
                </fieldset>
            </div>
            <div class="flex w-[92px] flex-col pt-px">
                <button class="h-[18px] rounded-xs border border-[#3c7fb1] bg-linear-to-b from-[#e4f3fb] to-[#a5d8f3] leading-4">确定</button>
                <button class="mt-2.5 h-[18px] rounded-xs border border-[#707070] bg-linear-to-b from-[#f4f4f4] to-[#cfcfcf] leading-4">复位</button>
                <button class="mt-[17px] h-[18px] rounded-xs border border-[#707070] bg-linear-to-b from-[#f4f4f4] to-[#cfcfcf] leading-4">自动(<u>A</u>)</button>
                <button class="mt-[17px] h-[18px] rounded-xs border border-[#707070] bg-linear-to-b from-[#f4f4f4] to-[#cfcfcf] leading-4">选项(<u>T</u>)...</button>
                <div class="mt-[15px] flex items-center pl-3 text-[#222]">
                    <button aria-label="设置黑场" class="w-[26px]"><svg class="h-4 w-4" viewBox="0 0 16 16"><path d="M2 14l1-3 5.500-5.500 2 2L5 13z" fill="#111"/><use href="#dropper"/></svg></button>
                    <button aria-label="设置灰场" class="w-5"><svg class="h-4 w-4" viewBox="0 0 16 16"><path d="M2 14l1-3 5.500-5.500 2 2L5 13z" fill="#888"/><use href="#dropper"/></svg></button>
                    <button aria-label="设置白场" class="flex h-[22px] w-[26px] items-center justify-center rounded-xs border border-[#555] bg-[#d6d6d6]"><svg class="h-4 w-4" viewBox="0 0 16 16"><path d="M2 14l1-3 5.500-5.500 2 2L5 13z" fill="#fff"/><use href="#dropper"/></svg></button>
                </div>
                <label class="mt-[13px] flex items-center gap-0.5 whitespace-nowrap">
                    <span class="grid">
                        <input type="checkbox" checked class="h-[13px] w-[13px] appearance-none border border-[#8e8f8f] bg-[#e6ebf2] [grid-area:1/1]">
                        <svg class="pointer-events-none h-[13px] w-[13px] [grid-area:1/1]" viewBox="0 0 13 13"><path d="M3 6l2.500 4L10 2.500" fill="none" stroke="#3a4f96" stroke-width="2"/></svg>
                    </span>
                    <span>预览(<u>P</u>)</span>
                </label>
            </div>
        </div>
    </div>
</body>
</html>
